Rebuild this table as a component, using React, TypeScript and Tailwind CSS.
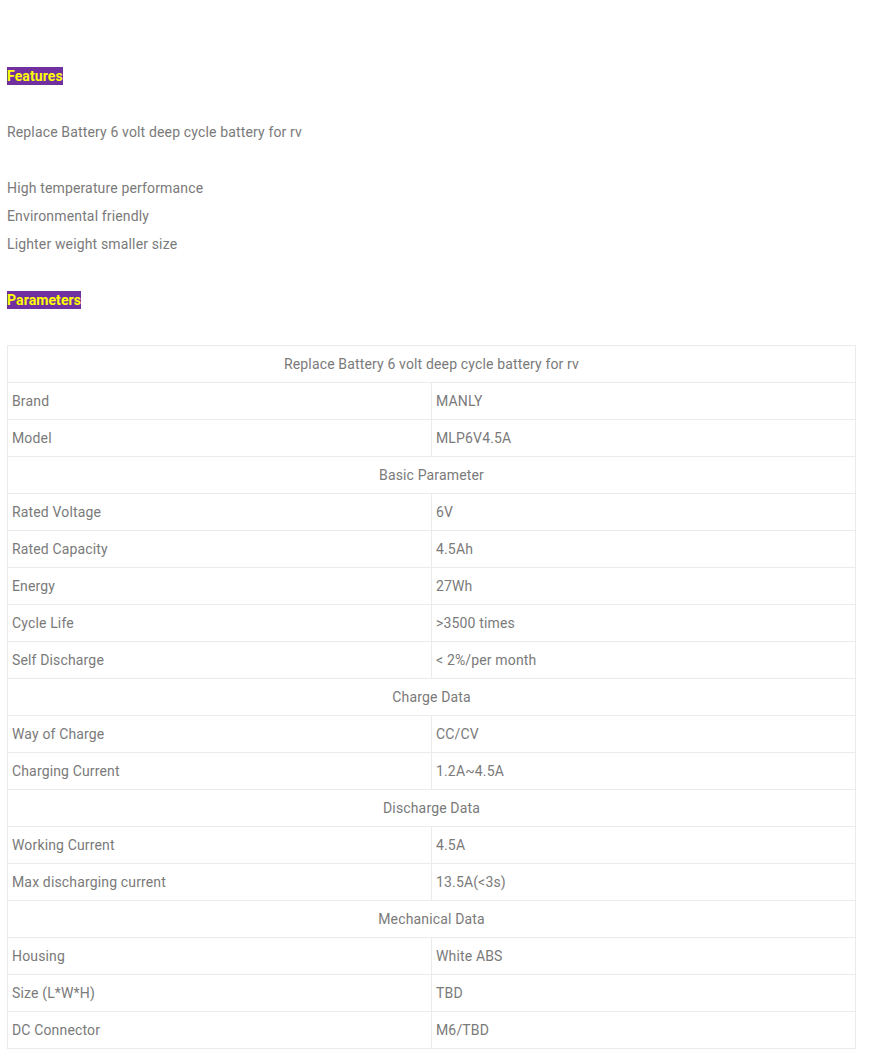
import React from "react";

type Row = { label: string; value?: string };

const rows: Row[] = [
  { label: "Replace Battery 6 volt deep cycle battery for rv" },
  { label: "Brand", value: "MANLY" },
  { label: "Model", value: "MLP6V4.5A" },
  { label: "Basic Parameter" },
  { label: "Rated Voltage", value: "6V" },
  { label: "Rated Capacity", value: "4.5Ah" },
  { label: "Energy", value: "27Wh" },
  { label: "Cycle Life", value: ">3500 times" },
  { label: "Self Discharge", value: "< 2%/per month" },
  { label: "Charge Data" },
  { label: "Way of Charge", value: "CC/CV" },
  { label: "Charging Current", value: "1.2A~4.5A" },
  { label: "Discharge Data" },
  { label: "Working Current", value: "4.5A" },
  { label: "Max discharging current", value: "13.5A(<3s)" },
  { label: "Mechanical Data" },
  { label: "Housing", value: "White ABS" },
  { label: "Size (L*W*H)", value: "TBD" },
  { label: "DC Connector", value: "M6/TBD" },
];

const Label = ({ text }: { text: string }) => (
  <span className="inline-block align-top bg-[#7030a0] text-[#ffff00] font-bold text-[14px] leading-[18px] h-[18px] tracking-[0.1px]">
    {text}
  </span>
);

const App = () => {
  return (
    <div className="bg-white text-[#7a7a7a] text-[14px] tracking-[0.15px] font-['Roboto',sans-serif] px-[7px] pt-[67px] pb-[10px] w-[863px]">
      <div className="h-[18px] leading-[18px]">
        <Label text="Features" />
      </div>
      <p className="mt-[37px] leading-[20px]">Replace Battery 6 volt deep cycle battery for rv</p>
      <div className="mt-[32px] leading-[28px]">
        <p>High temperature performance</p>
        <p>Environmental friendly</p>
        <p>Lighter weight smaller size</p>
      </div>
      <div className="mt-[33px] h-[18px] leading-[18px]">
        <Label text="Parameters" />
      </div>
      <table className="mt-[36px] w-[849px] border-collapse table-fixed">
        <tbody>
          {rows.map((r, i) =>
            r.value === undefined ? (
              <tr key={i} className="h-[37px]">
                <td colSpan={2} className="border border-[#ebebeb] text-center px-[5px] leading-[20px]">
                  {r.label}
                </td>
              </tr>
            ) : (
              <tr key={i} className="h-[37px]">
                <td className="border border-[#ebebeb] px-[4px] w-[424px] leading-[20px]">{r.label}</td>
                <td className="border border-[#ebebeb] px-[4px] leading-[20px]">{r.value}</td>
              </tr>
            )
          )}
        </tbody>
      </table>
    </div>
  );
};

export default App;
